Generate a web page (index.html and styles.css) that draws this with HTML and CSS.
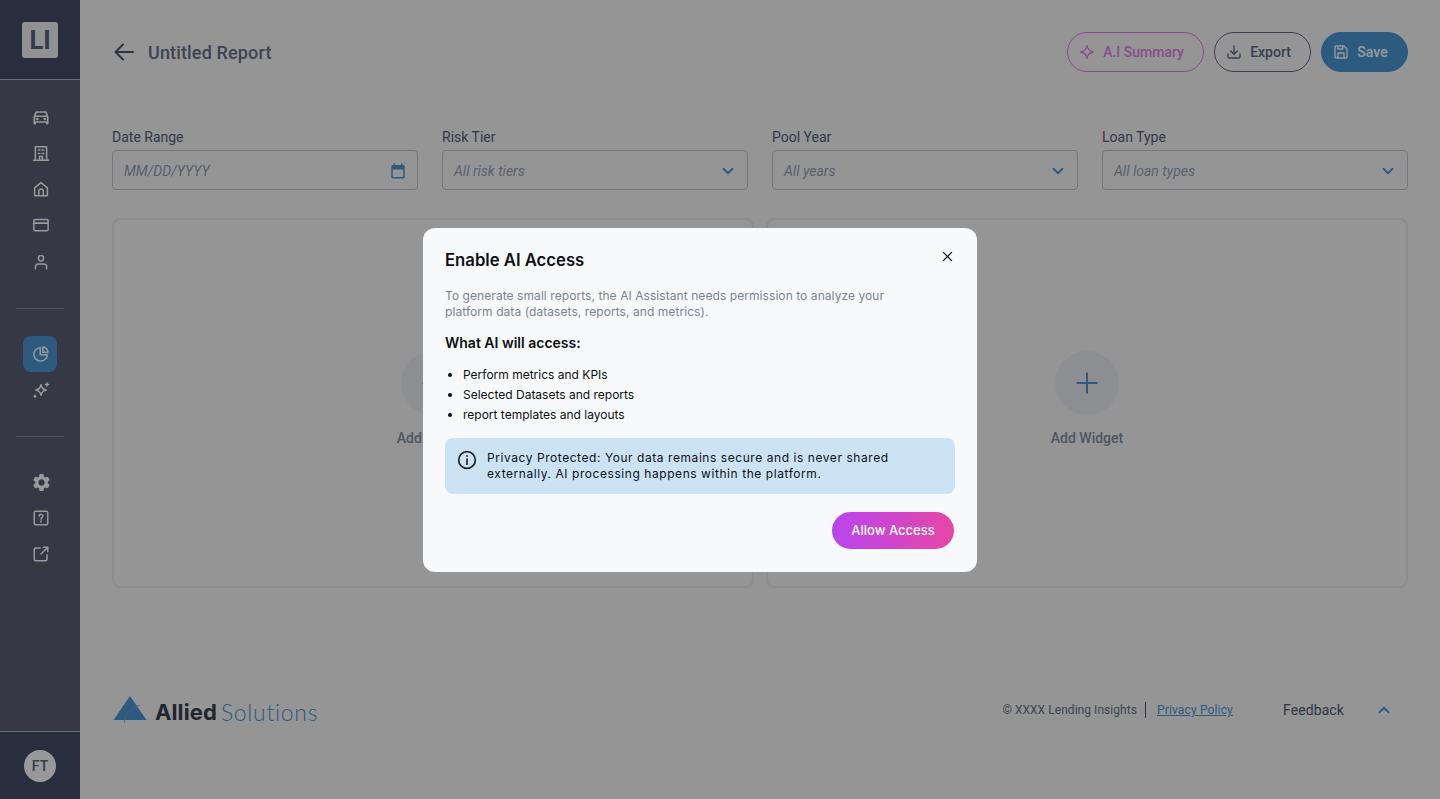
FILE: index.html
```html
<!DOCTYPE html>
<html lang="en">
<head>
    <meta charset="UTF-8">
    <meta name="viewport" content="width=device-width, initial-scale=1.0">
    <title>Untitled Report</title>
    <link rel="stylesheet" href="styles.css">
</head>
<body>

    <aside class="sidebar">
        <div class="sidebar-top">
            <div class="brand-tile">LI</div>
        </div>

        <nav class="sidebar-nav">
            <div class="nav-group nav-main">
                <a class="nav-item">
                    <svg class="car-icon" viewBox="0 0 24 24"><path d="M18.92 6.01C18.72 5.42 18.16 5 17.5 5h-11c-.66 0-1.21.42-1.42 1.01L3 12v8c0 .55.45 1 1 1h1c.55 0 1-.45 1-1v-1h12v1c0 .55.45 1 1 1h1c.55 0 1-.45 1-1v-8l-2.08-5.99zM6.85 7h10.29l1.08 3.11H5.77L6.85 7zM19 17H5v-5h14v5z"/><circle cx="7.5" cy="14.5" r="1.5"/><circle cx="16.5" cy="14.5" r="1.5"/></svg>
                </a>
                <a class="nav-item">
                    <svg class="icon" viewBox="0 0 24 24"><path d="M2 21.500h20M4.500 21V3.500h15V21M8.500 8h2M13.500 8h2M8.500 12.500h2M13.500 12.500h2M10 21v-4.500h4V21"/></svg>
                </a>
                <a class="nav-item">
                    <svg class="icon" viewBox="0 0 24 24"><path d="M3.500 10.500 12 3.500l8.500 7V20a1 1 0 0 1-1 1h-15a1 1 0 0 1-1-1zM9 21v-6a3 3 0 0 1 6 0v6"/></svg>
                </a>
                <a class="nav-item">
                    <svg class="icon" viewBox="0 0 24 24"><rect x="2.500" y="4.500" width="19" height="15" rx="1.500"/><path d="M2.500 9.500h19" stroke-width="2.600"/></svg>
                </a>
                <a class="nav-item nav-item-low">
                    <svg class="icon" viewBox="0 0 24 24"><circle cx="12" cy="7" r="3.500"/><path d="M4.500 21v-2.500a4 4 0 0 1 4-4h7a4 4 0 0 1 4 4V21"/></svg>
                </a>
            </div>

            <div class="nav-divider"></div>

            <div class="nav-group nav-reports">
                <a class="nav-item active">
                    <svg class="icon" viewBox="0 0 24 24"><path d="M11 3.500a9 9 0 1 0 9.500 9.500H11z"/><path d="M14.500 2.800a7.500 7.500 0 0 1 6.700 6.700h-6.700z"/></svg>
                </a>
                <a class="nav-item">
                    <svg class="icon" viewBox="0 0 24 24"><path d="M12 5c.8 4.500 2.500 6.200 7 7-4.500.8-6.200 2.500-7 7-.8-4.500-2.500-6.200-7-7 4.500-.8 6.200-2.500 7-7zM20 2.500v4M18 4.500h4M4 19v2.500M2.800 20.200h2.400"/></svg>
                </a>
            </div>

            <div class="nav-divider"></div>

            <div class="nav-group nav-util">
                <a class="nav-item">
                    <svg class="solid-icon" viewBox="0 0 24 24"><path d="M19.14 12.94c.04-.3.06-.61.06-.94 0-.32-.02-.64-.07-.94l2.03-1.58c.18-.14.23-.41.12-.61l-1.92-3.32c-.12-.22-.37-.29-.59-.22l-2.39.96c-.5-.38-1.03-.7-1.62-.94l-.36-2.54c-.04-.24-.24-.41-.48-.41h-3.84c-.24 0-.43.17-.47.41l-.36 2.54c-.59.24-1.13.57-1.62.94l-2.39-.96c-.22-.08-.47 0-.59.22L2.74 8.87c-.12.21-.08.47.12.61l2.03 1.58c-.05.3-.09.63-.09.94s.02.64.07.94l-2.03 1.58c-.18.14-.23.41-.12.61l1.92 3.32c.12.22.37.29.59.22l2.39-.96c.5.38 1.03.7 1.62.94l.36 2.54c.05.24.24.41.48.41h3.84c.24 0 .44-.17.47-.41l.36-2.54c.59-.24 1.13-.56 1.62-.94l2.39.96c.22.08.47 0 .59-.22l1.92-3.32c.12-.22.07-.47-.12-.61l-2.01-1.58zM12 15.600c-1.98 0-3.6-1.62-3.6-3.6s1.62-3.6 3.6-3.6 3.6 1.62 3.6 3.6-1.62 3.6-3.6 3.6z"/></svg>
                </a>
                <a class="nav-item">
                    <svg class="icon" viewBox="0 0 24 24"><rect x="3" y="3" width="18" height="18" rx="2"/><path d="M9.500 9.500a2.500 2.500 0 1 1 3.700 2.200c-.8.400-1.200.9-1.200 1.800M12 16v1.500"/></svg>
                </a>
                <a class="nav-item">
                    <svg class="icon" viewBox="0 0 24 24"><path d="M11 4H5a2 2 0 0 0-2 2v13a2 2 0 0 0 2 2h13a2 2 0 0 0 2-2v-6M12 12l9-9M15 3h6v6"/></svg>
                </a>
            </div>
        </nav>

        <div class="sidebar-bottom">
            <div class="avatar">FT</div>
        </div>
    </aside>

    <main class="content">
        <header class="report-header">
            <div class="report-title">
                <svg class="back-arrow" viewBox="0 0 24 24"><path d="M21 12H4M11 4.500 3.500 12l7.500 7.500"/></svg>
                <h1>Untitled Report</h1>
            </div>
            <div class="report-actions">
                <button class="btn btn-ai">
                    <svg class="btn-icon" viewBox="0 0 24 24"><path d="M12 2.500c1 6 3.500 8.500 9.500 9.500-6 1-8.500 3.500-9.500 9.500-1-6-3.500-8.500-9.500-9.500 6-1 8.500-3.500 9.500-9.500z"/></svg>
                    A.I Summary
                </button>
                <button class="btn btn-export">
                    <svg class="btn-icon" viewBox="0 0 24 24"><path d="M12 3v12M7 10.500l5 5 5-5M3 15v4a2 2 0 0 0 2 2h14a2 2 0 0 0 2-2v-4"/></svg>
                    Export
                </button>
                <button class="btn btn-save">
                    <svg class="btn-icon" viewBox="0 0 24 24"><path d="M3 5a2 2 0 0 1 2-2h11.500L21 7.500V19a2 2 0 0 1-2 2H5a2 2 0 0 1-2-2zM7.500 21v-7.500h9V21M7.500 3v4.500h7V3"/></svg>
                    Save
                </button>
            </div>
        </header>

        <section class="filters">
            <div class="filter">
                <label>Date Range</label>
                <div class="field">
                    <span>MM/DD/YYYY</span>
                    <svg class="calendar-icon" viewBox="0 0 24 24"><path d="M19 4h-1V2h-2v2H8V2H6v2H5a2 2 0 0 0-2 2v14a2 2 0 0 0 2 2h14a2 2 0 0 0 2-2V6a2 2 0 0 0-2-2zm0 16H5V10h14z"/></svg>
                </div>
            </div>
            <div class="filter">
                <label>Risk Tier</label>
                <div class="field">
                    <span>All risk tiers</span>
                    <svg class="chevron" viewBox="0 0 24 24"><path d="M6 9l6 6 6-6"/></svg>
                </div>
            </div>
            <div class="filter">
                <label>Pool Year</label>
                <div class="field">
                    <span>All years</span>
                    <svg class="chevron" viewBox="0 0 24 24"><path d="M6 9l6 6 6-6"/></svg>
                </div>
            </div>
            <div class="filter">
                <label>Loan Type</label>
                <div class="field">
                    <span>All loan types</span>
                    <svg class="chevron" viewBox="0 0 24 24"><path d="M6 9l6 6 6-6"/></svg>
                </div>
            </div>
        </section>

        <section class="widgets">
            <div class="widget-card">
                <div class="add-circle">
                    <svg class="plus" viewBox="0 0 24 24"><path d="M12 1.500v21M1.500 12h21"/></svg>
                </div>
                <span class="add-label">Add Widget</span>
            </div>
            <div class="widget-card">
                <div class="add-circle">
                    <svg class="plus" viewBox="0 0 24 24"><path d="M12 1.500v21M1.500 12h21"/></svg>
                </div>
                <span class="add-label">Add Widget</span>
            </div>
        </section>

        <footer class="page-footer">
            <div class="footer-logo">
                <svg class="logo-mark" viewBox="0 0 34 28"><path class="logo-tri" d="M17 1 33.500 25H.5z"/><path class="logo-arc" d="M11 28c1-9 6-15 16-18"/></svg>
                <span class="logo-allied">Allied</span>
                <span class="logo-solutions">Solutions</span>
            </div>
            <div class="footer-links">
                <span class="copyright">© XXXX Lending Insights</span>
                <a class="privacy">Privacy Policy</a>
                <span class="feedback">Feedback</span>
                <svg class="chevron chevron-up" viewBox="0 0 24 24"><path d="M6 15l6-6 6 6"/></svg>
            </div>
        </footer>
    </main>

    <div class="overlay">
        <div class="modal">
            <div class="modal-head">
                <h2>Enable AI Access</h2>
                <svg class="close-icon" viewBox="0 0 24 24"><path d="M5 5l14 14M19 5 5 19"/></svg>
            </div>
            <p class="modal-desc">To generate small reports, the AI Assistant needs permission to analyze your platform data (datasets, reports, and metrics).</p>
            <h3>What AI will access:</h3>
            <ul class="access-list">
                <li>Perform metrics and KPIs</li>
                <li>Selected Datasets and reports</li>
                <li>report templates and layouts</li>
            </ul>
            <div class="privacy-note">
                <svg class="info-icon" viewBox="0 0 24 24"><circle cx="12" cy="12" r="10"/><path d="M12 11v6M12 7v.5"/></svg>
                <p>Privacy Protected: Your data remains secure and is never shared externally. AI processing happens within the platform.</p>
            </div>
            <div class="modal-actions">
                <button class="allow-btn">Allow Access</button>
            </div>
        </div>
    </div>

</body>
</html>
```

FILE: styles.css
```css
* {
    box-sizing: border-box;
}

body {
    margin: 0;
    height: 100vh;
    display: flex;
    overflow: hidden;
    background-color: #f8f9fb;
    font-family: 'Roboto', sans-serif;
    color: #555f7b;
}

/* Sidebar */
.sidebar {
    width: 80px;
    flex-shrink: 0;
    display: flex;
    flex-direction: column;
    background-color: #5a6073;
}

.sidebar-top {
    height: 80px;
    display: flex;
    align-items: center;
    justify-content: center;
    background-color: #444d66;
    border-bottom: 1px solid #b4b8c2;
}

.brand-tile {
    width: 36px;
    height: 36px;
    border-radius: 3px;
    background-color: #f2f2f2;
    color: #59627c;
    font-family: 'Inter', sans-serif;
    font-size: 25px;
    font-weight: 700;
    line-height: 36px;
    text-align: center;
}

.sidebar-nav {
    flex: 1;
}

.nav-main {
    padding: 19px 0 29px;
}

.nav-reports {
    padding: 27px 0 28px;
}

.nav-util {
    padding-top: 27px;
}

.nav-divider {
    height: 1px;
    margin: 0 16px;
    background-color: #7f8698;
}

.nav-item {
    width: 34px;
    height: 36px;
    margin-left: 23px;
    padding-left: 2px;
    display: flex;
    align-items: center;
    justify-content: center;
    border-radius: 8px;
    color: #fff;
}

.nav-item-low {
    padding-top: 2px;
}

.nav-item.active {
    background-color: #4b98d5;
}

.icon {
    width: 18px;
    height: 18px;
    fill: none;
    stroke: currentColor;
    stroke-width: 2;
    stroke-linejoin: round;
    stroke-linecap: round;
}

.car-icon {
    width: 20px;
    height: 20px;
    fill: currentColor;
}

.solid-icon {
    width: 21px;
    height: 21px;
    fill: currentColor;
}

.sidebar-bottom {
    height: 68px;
    display: flex;
    align-items: center;
    justify-content: center;
    background-color: #444d66;
    border-top: 1px solid #b4b8c2;
}

.avatar {
    width: 32px;
    height: 32px;
    border-radius: 50%;
    background-color: #ffffff;
    color: #59627c;
    font-size: 14px;
    font-weight: 500;
    line-height: 32px;
    text-align: center;
}

/* Main column */
.content {
    flex: 1;
    min-width: 0;
    padding: 32px 32px 0;
}

.report-header {
    height: 40px;
    display: flex;
    align-items: center;
    justify-content: space-between;
}

.report-title {
    display: flex;
    align-items: center;
    gap: 12px;
}

.report-title h1 {
    margin: 0;
    font-size: 18px;
    font-weight: 500;
    letter-spacing: 0.15px;
    color: #667085;
}

.back-arrow {
    width: 24px;
    height: 24px;
    fill: none;
    stroke: #4d5770;
    stroke-width: 2;
    stroke-linecap: round;
    stroke-linejoin: round;
}

.report-actions {
    display: flex;
    gap: 10px;
}

.btn {
    height: 40px;
    padding: 0 8px 0 0;
    display: flex;
    align-items: center;
    justify-content: center;
    gap: 8px;
    border-radius: 20px;
    border: 1px solid;
    background: transparent;
    font-family: 'Roboto', sans-serif;
    font-size: 14px;
    font-weight: 500;
}

.btn-icon {
    width: 16px;
    height: 16px;
    fill: none;
    stroke: currentColor;
    stroke-width: 2;
    stroke-linecap: round;
    stroke-linejoin: round;
}

.btn-ai {
    width: 137px;
    color: #e47fe8;
    border-color: #e47fe8;
}

.btn-export {
    width: 97px;
    color: #626b82;
    border-color: #626b82;
}

.btn-save {
    width: 87px;
    color: #fff;
    background-color: #4b98d5;
    border-color: #4b98d5;
}

/* Filters */
.filters {
    display: grid;
    grid-template-columns: repeat(4, 1fr);
    gap: 24px;
    margin-top: 56px;
}

.filter label {
    display: block;
    height: 17px;
    margin-bottom: 5px;
    font-size: 14px;
    line-height: 18px;
}

.field {
    height: 40px;
    padding: 1px 10px 0 11px;
    display: flex;
    align-items: center;
    justify-content: space-between;
    border: 1.5px solid #c3c8d4;
    border-radius: 4px;
    background-color: #f8f9fb;
    font-size: 14px;
    font-style: italic;
    color: #98a0b3;
}

.calendar-icon {
    width: 18px;
    height: 18px;
    fill: #4b98d5;
}

.chevron {
    width: 18px;
    height: 18px;
    fill: none;
    stroke: #4b98d5;
    stroke-width: 2.500;
    stroke-linecap: round;
    stroke-linejoin: round;
}

/* Widget cards */
.widgets {
    display: grid;
    grid-template-columns: 1fr 1fr;
    gap: 12px;
    margin-top: 28px;
}

.widget-card {
    height: 370px;
    display: flex;
    flex-direction: column;
    align-items: center;
    padding-top: 131px;
    border: 2px solid #e8eaee;
    border-radius: 8px;
}

.add-circle {
    width: 64px;
    height: 64px;
    display: flex;
    align-items: center;
    justify-content: center;
    border-radius: 50%;
    background-color: #eceef3;
}

.plus {
    width: 24px;
    height: 24px;
    fill: none;
    stroke: #4b98d5;
    stroke-width: 2;
}

.add-label {
    margin-top: 14px;
    font-size: 14px;
    font-weight: 500;
    line-height: 18px;
    color: #858ea3;
}

/* Footer */
.page-footer {
    height: 40px;
    margin-top: 102px;
    display: flex;
    align-items: center;
    justify-content: space-between;
}

.footer-logo {
    display: flex;
    align-items: center;
    margin: 4px 0 0 1px;
}

.logo-mark {
    width: 34px;
    height: 28px;
    margin-top: -6px;
    margin-right: 8px;
}

.logo-tri {
    fill: #4b98d5;
}

.logo-arc {
    fill: none;
    stroke: #c07fd0;
    stroke-width: 0.800;
}

.logo-allied {
    font-family: 'Inter', sans-serif;
    font-size: 22px;
    font-weight: 700;
    letter-spacing: 0.1px;
    color: #3a3f4c;
}

.logo-solutions {
    margin-left: 4px;
    font-family: 'Lato', sans-serif;
    font-size: 23px;
    font-weight: 300;
    letter-spacing: 0.7px;
    color: #4b98d5;
}

.footer-links {
    display: flex;
    align-items: center;
}

.copyright {
    padding-right: 8px;
    border-right: 1px solid #4d5770;
    font-size: 12px;
    line-height: 16px;
    letter-spacing: 0.05px;
    color: #6a7287;
}

.privacy {
    margin-left: 11px;
    font-size: 12px;
    letter-spacing: 0.15px;
    color: #4b98d5;
    text-decoration: underline;
}

.feedback {
    margin-left: 50px;
    font-size: 14px;
    letter-spacing: 0.1px;
    color: #4d5770;
}

.chevron-up {
    margin-left: 31px;
    margin-right: 15px;
}

/* Modal */
.overlay {
    position: fixed;
    inset: 0;
    display: flex;
    align-items: center;
    justify-content: center;
    padding-right: 40px;
    background-color: rgba(0, 0, 0, 0.4);
}

.modal {
    width: 554px;
    height: 344px;
    padding: 22px;
    border-radius: 12px;
    background-color: #f8f9fb;
    font-family: 'Inter', sans-serif;
    color: #0d0f14;
}

.modal-head {
    height: 20px;
    display: flex;
    align-items: center;
    justify-content: space-between;
}

.modal-head h2 {
    margin: 1px 0 0;
    font-size: 16.700px;
    font-weight: 600;
    line-height: 20px;
}

.close-icon {
    width: 15px;
    height: 15px;
    margin: -7px 0 0 0;
    fill: none;
    stroke: #0d0f14;
    stroke-width: 2;
}

.modal-desc {
    margin: 18px 0 0;
    width: 470px;
    font-size: 12px;
    line-height: 16px;
    letter-spacing: 0.07px;
    color: #7b8494;
}

.modal h3 {
    margin: 14px 0 0;
    font-size: 14px;
    font-weight: 600;
    line-height: 18px;
}

.access-list {
    margin: 13px 0 0;
    padding: 0 0 0 18px;
    font-size: 12px;
    line-height: 20px;
}

.privacy-note {
    height: 56px;
    margin-top: 13px;
    padding: 12.500px 12px 0;
    display: flex;
    gap: 10px;
    border-radius: 8px;
    background-color: #cce3f6;
}

.privacy-note p {
    margin: 0;
    width: 430px;
    font-size: 12px;
    line-height: 16px;
    letter-spacing: 0.56px;
}

.info-icon {
    width: 20px;
    height: 20px;
    fill: none;
    stroke: #1d2026;
    stroke-width: 2;
    stroke-linecap: round;
}

.modal-actions {
    margin-top: 18px;
    display: flex;
    justify-content: flex-end;
}

.allow-btn {
    width: 122px;
    height: 37px;
    margin-right: 1px;
    border: none;
    border-radius: 19px;
    background: linear-gradient(90deg, #b945f0, #e846a6);
    color: #fff;
    font-family: 'Inter', sans-serif;
    font-size: 13px;
    font-weight: 500;
}
```
